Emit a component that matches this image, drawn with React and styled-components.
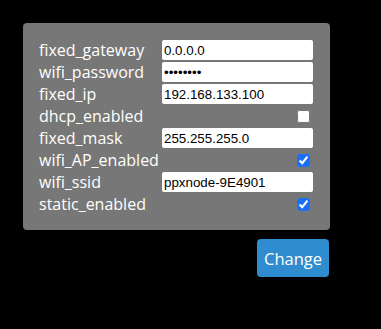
import React from "react";
import styled, { createGlobalStyle } from "styled-components";

const GlobalStyle = createGlobalStyle`
  html, body {
    margin: 0;
    background: #000000;
  }
  body {
    font-family: "Open Sans", "Liberation Sans", sans-serif;
  }
`;

const Page = styled.div`
  padding: 23px 0 0 23px;
  width: 307px;
`;

const Panel = styled.form`
  background: #777777;
  border-radius: 4px;
  padding: 17px 17px 16px 16px;
  display: grid;
  grid-template-columns: 123px 151px;
  grid-auto-rows: 20px;
  row-gap: 2px;
  align-items: center;
`;

const Label = styled.label`
  color: #ffffff;
  font-size: 16px;
  line-height: 20px;
  white-space: nowrap;
`;

const TextInput = styled.input`
  box-sizing: border-box;
  width: 151px;
  height: 20px;
  border: none;
  border-radius: 2px;
  background: #ffffff;
  padding: 0 2px;
  margin: 0;
  font-family: "Liberation Sans", Arial, sans-serif;
  font-size: 13.33px;
  color: #000000;
  outline: none;
`;

const Check = styled.input`
  justify-self: end;
  width: 13px;
  height: 13px;
  margin: 0 3px 0 0;
  accent-color: #1a6ff5;
`;

const Actions = styled.div`
  display: flex;
  justify-content: flex-end;
  padding: 9px 1px 0 0;
`;

const Button = styled.button`
  background: #2f8cce;
  color: #ffffff;
  border: none;
  border-radius: 4px;
  width: 72px;
  height: 38px;
  padding: 0;
  font-family: "Open Sans", "Liberation Sans", sans-serif;
  font-size: 16.5px;
  cursor: pointer;
`;

const fields = [
  { name: "fixed_gateway", type: "text", value: "0.0.0.0" },
  { name: "wifi_password", type: "password", value: "12345678" },
  { name: "fixed_ip", type: "text", value: "192.168.133.100" },
  { name: "dhcp_enabled", type: "checkbox", value: false },
  { name: "fixed_mask", type: "text", value: "255.255.255.0" },
  { name: "wifi_AP_enabled", type: "checkbox", value: true },
  { name: "wifi_ssid", type: "text", value: "ppxnode-9E4901" },
  { name: "static_enabled", type: "checkbox", value: true },
];

export default function App() {
  return (
    <Page>
      <GlobalStyle />
      <Panel onSubmit={(e) => e.preventDefault()}>
        {fields.map((f) => (
          <React.Fragment key={f.name}>
            <Label htmlFor={f.name}>{f.name}</Label>
            {f.type === "checkbox" ? (
              <Check id={f.name} type="checkbox" defaultChecked={f.value} />
            ) : (
              <TextInput id={f.name} type={f.type} defaultValue={f.value} />
            )}
          </React.Fragment>
        ))}
      </Panel>
      <Actions>
        <Button type="button">Change</Button>
      </Actions>
    </Page>
  );
}
